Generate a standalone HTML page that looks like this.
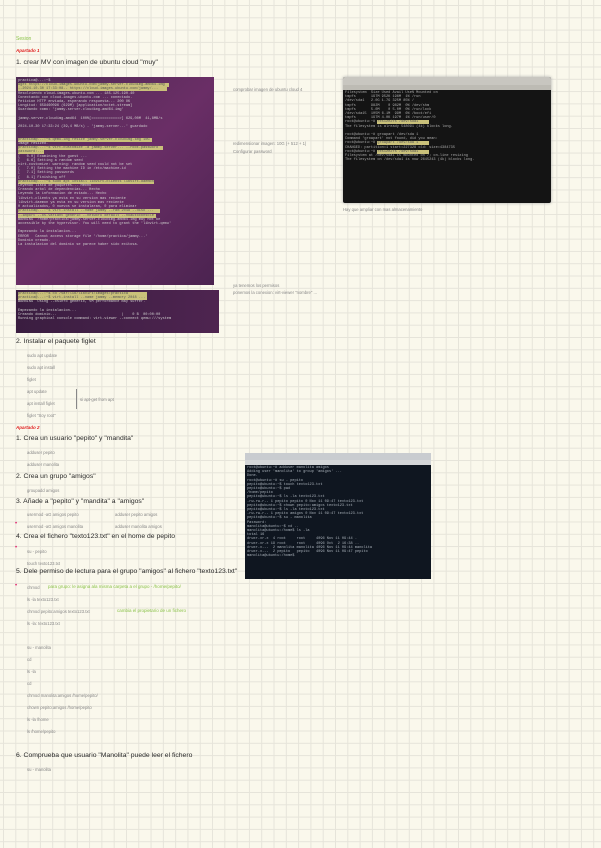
<!DOCTYPE html><html><head><meta charset="utf-8"><style>
body{margin:0;width:601px;height:848px;overflow:hidden;background-color:#faf8ec;
background-image:linear-gradient(90deg,#e6e4da 1px,transparent 1px),linear-gradient(#e6e4da 1px,transparent 1px);
background-size:12.3px 12.3px;background-position:3px 5px;font-family:"Liberation Sans",sans-serif;position:relative}
.t{position:absolute;white-space:nowrap;color:#333;}
.h{font-size:6.8px;color:#2a2a2a}
.s{font-size:4.2px;color:#888}
.r{font-size:4.5px;color:#e02020;font-style:italic;font-weight:bold}
.g{font-size:4.5px;color:#8bc34a}
.img{position:absolute;overflow:hidden}
.ln{font-family:"Liberation Mono",monospace;font-size:3.6px;line-height:4.2px;color:#ccc;white-space:pre;filter:blur(0.3px)}
.hl{background:#c9c07a;color:#555}
</style></head><body>
<div class="t g" style="left:16px;top:36px;font-size:5px">Sesion</div>
<div class="t r" style="left:16px;top:48px">Apartado 1</div>
<div class="t h" style="left:16px;top:59px">1. crear MV con imagen de ubuntu cloud "muy"</div>

<div class="img" style="left:16px;top:77px;width:198px;height:208px;background:linear-gradient(135deg,#4e2a52,#6a2e66 50%,#4b2350);">
<div class="ln" style="padding:2px 2px">practica@...:~$ 
<span class="hl">wget https://cloud-images.ubuntu.com/jammy-server-cloudimg-amd64.img  </span>
<span class="hl">--2024-10-30 17:33:08-- https://cloud-images.ubuntu.com/jammy/...    </span>
Resolviendo cloud-images.ubuntu.com ... 185.125.190.40
Conectando con cloud-images.ubuntu.com ... conectado.
Peticion HTTP enviada, esperando respuesta... 200 OK
Longitud: 659460096 (629M) [application/octet-stream]
Guardando como: 'jammy-server-cloudimg-amd64.img'

jammy-server-cloudimg-amd64  100%[=============>] 629,00M  41,8MB/s

2024-10-30 17:33:24 (39,4 MB/s) - 'jammy-server...' guardado


<span class="hl">practica@...:~$ qemu-img resize jammy-server-cloudimg.img 10G </span>
Image resized.
<span class="hl">practica@...:~$ virt-customize -a jammy-server... --root-password  </span>
<span class="hl">password:...</span>
[   0.0] Examining the guest ...
[   6.6] Setting a random seed
virt-customize: warning: random seed could not be set
[   7.0] Setting the machine ID in /etc/machine-id
[   7.1] Setting passwords
[   8.1] Finishing off
<span class="hl">practica@...:~$ sudo apt install libvirt-clients libvirt-daemon</span>
Leyendo lista de paquetes... Hecho
Creando arbol de dependencias... Hecho
Leyendo la informacion de estado... Hecho
libvirt-clients ya esta en su version mas reciente
libvirt-daemon ya esta en su version mas reciente
0 actualizados, 0 nuevos se instalaran, 0 para eliminar
<span class="hl">practica@...:~$ virt-install --name jammy --ram 2048 --disk ...   </span>
<span class="hl">--import --os-variant generic --network default --noautoconsole </span>
WARNING  /home/practica/jammy-server-cloudimg-amd64.img may not be
accessible by the hypervisor. You will need to grant the 'libvirt-qemu'

Empezando la instalacion...
ERROR   Cannot access storage file '/home/practica/jammy...'
Dominio creado.
La instalacion del dominio se parece haber sido exitosa.
</div></div>
<div class="img" style="left:16px;top:290px;width:203px;height:43px;background:linear-gradient(90deg,#3a1d40,#4e2450);">
<div class="ln" style="padding:2px 2px"><span class="hl">practica@...:~$ cd /var/lib/libvirt/images/practica         </span>
<span class="hl">practica@...:~$ virt-install --name jammy --memory 2048 ... </span>
WARNING  Using --osinfo generic, VM performance may suffer.

Empezando la instalacion...
Creando dominio...                              |    0 B  00:00:00
Running graphical console command: virt-viewer --connect qemu:///system
</div></div>

<div class="t s" style="left:233px;top:87px">comprobar imagen de ubuntu cloud 4</div>
<div class="t s" style="left:233px;top:141px">redimensionar imagen: 10G (+ 512 + 1)</div>
<div class="t s" style="left:233px;top:149px">Configurar password</div>
<div class="t s" style="left:233px;top:283px">ya tenemos los permisos</div>
<div class="t s" style="left:233px;top:290px">ponemos la conexion: virt-viewer "nombre" ...</div>

<div class="img" style="left:343px;top:77px;width:208px;height:126px;background:#141414;box-shadow:0 0 3px #aaa;border-radius:2px">
<div style="height:8px;background:#c8c6c0"></div><div style="height:5px;background:#bdbbb4"></div>
<div class="ln" style="color:#aaa;padding:1px 2px">Filesystem  Size Used Avail Use% Mounted on
tmpfs       197M 952K 196M  1% /run
/dev/sda1   2.0G 1.7G 325M 85% /
tmpfs       982M    0 982M  0% /dev/shm
tmpfs       5.0M    0 5.0M  0% /run/lock
/dev/sda15  105M 6.1M  99M  6% /boot/efi
tmpfs       197M 4.0K 197M  1% /run/user/0
root@ubuntu:~# <span class="hl">resize2fs /dev/sda1     </span>
The filesystem is already 548091 (4k) blocks long.

root@ubuntu:~# growpart /dev/sda 1
Command 'growpart' not found, did you mean:
root@ubuntu:~# <span class="hl">growpart /dev/sda 1     </span>
CHANGED: partition=1 start=227328 old: size=4384735
root@ubuntu:~# <span class="hl">resize2fs /dev/sda1     </span>
Filesystem at /dev/sda1 is mounted on /; on-line resizing
The filesystem on /dev/sda1 is now 2645243 (4k) blocks long.
</div></div>
<div class="t s" style="left:343px;top:207px">Hay que ampliar con mas almacenamiento</div>

<div class="t h" style="left:16px;top:338px">2. Instalar el paquete figlet</div>
<div class="t s" style="left:27px;top:353px">sudo apt update</div>
<div class="t s" style="left:27px;top:365px">sudo apt install</div>
<div class="t s" style="left:27px;top:377px">figlet</div>
<div class="t s" style="left:27px;top:389px">apt update</div>
<div class="t s" style="left:27px;top:401px">apt install figlet</div>
<div class="t s" style="left:27px;top:413px">figlet "Soy root"</div>
<div style="position:absolute;left:76px;top:389px;width:1px;height:20px;background:#888"></div>
<div class="t s" style="left:80px;top:397px">si apt-get from apt</div>
<div class="t r" style="left:16px;top:425px">Apartado 2</div>
<div class="t h" style="left:16px;top:435px">1. Crea un usuario "pepito" y "mandita"</div>
<div class="t s" style="left:27px;top:450px">adduser pepito</div>
<div class="t s" style="left:27px;top:462px">adduser manolita</div>
<div class="t h" style="left:16px;top:473px">2. Crea un grupo "amigos"</div>
<div class="t s" style="left:27px;top:488px">groupadd amigos</div>
<div class="t h" style="left:16px;top:498px">3. Añade a "pepito" y "mandita" a "amigos"</div>
<div class="t s" style="left:27px;top:512px">usermod -aG amigos pepito</div>
<div class="t s" style="left:115px;top:512px">adduser pepito amigos</div>
<div class="t s" style="left:27px;top:524px">usermod -aG amigos manolita</div>
<div class="t s" style="left:115px;top:524px">adduser manolita amigos</div>
<div class="t h" style="left:16px;top:533px">4. Crea el fichero "texto123.txt" en el home de pepito</div>
<div class="t s" style="left:27px;top:549px">su - pepito</div>
<div class="t s" style="left:27px;top:561px">touch texto123.txt</div>

<div class="img" style="left:245px;top:453px;width:186px;height:126px;background:#0f1620;">
<div style="height:7px;background:#c9ccd0"></div><div style="height:5px;background:#d4d6d8"></div>
<div class="ln" style="color:#a8b0b8;padding:1px 2px">root@ubuntu:~# adduser manolita amigos
Adding user 'manolita' to group 'amigos' ...
Done.
root@ubuntu:~# su - pepito
pepito@ubuntu:~$ touch texto123.txt
pepito@ubuntu:~$ pwd
/home/pepito
pepito@ubuntu:~$ ls -la texto123.txt
-rw-rw-r-- 1 pepito pepito 0 Nov 11 09:47 texto123.txt
pepito@ubuntu:~$ chown pepito:amigos texto123.txt
pepito@ubuntu:~$ ls -la texto123.txt
-rw-rw-r-- 1 pepito amigos 0 Nov 11 09:47 texto123.txt
pepito@ubuntu:~$ su - manolita
Password:
manolita@ubuntu:~$ cd ..
manolita@ubuntu:/home$ ls -la
total 16
drwxr-xr-x  4 root     root     4096 Nov 11 09:44 .
drwxr-xr-x 19 root     root     4096 Oct  2 16:38 ..
drwxr-x---  2 manolita manolita 4096 Nov 11 09:44 manolita
drwxr-x---  2 pepito   pepito   4096 Nov 11 09:47 pepito
manolita@ubuntu:/home$
</div></div>

<div class="t h" style="left:16px;top:568px">5. Dele permiso de lectura para el grupo "amigos" al fichero "texto123.txt"</div>
<div class="t s" style="left:27px;top:585px">chmod</div>
<div class="t g" style="left:48px;top:584px">para grupo: le asigna ala misma carpeta a el grupo - /home/pepito/</div>
<div class="t s" style="left:27px;top:597px">ls -la texto123.txt</div>
<div class="t s" style="left:27px;top:609px">chmod pepito:amigos texto123.txt</div>
<div class="t g" style="left:117px;top:608px">cambia el propietario de un fichero</div>
<div class="t s" style="left:27px;top:621px">ls -la: texto123.txt</div>
<div class="t s" style="left:27px;top:645px">su - manolita</div>
<div class="t s" style="left:27px;top:657px">cd</div>
<div class="t s" style="left:27px;top:669px">ls -la</div>
<div class="t s" style="left:27px;top:681px">cd</div>
<div class="t s" style="left:27px;top:693px">chmod manolita:amigos /home/pepito/</div>
<div class="t s" style="left:27px;top:705px">chown pepito:amigos /home/pepito</div>
<div class="t s" style="left:27px;top:717px">ls -la /home</div>
<div class="t s" style="left:27px;top:729px">ls /home/pepito</div>
<div class="t h" style="left:16px;top:752px">6. Comprueba que usuario "Manolita" puede leer el fichero</div>
<div class="t s" style="left:27px;top:767px">su - manolita</div>
<div class="t" style="left:15px;top:583px;color:#e0206a;font-size:6px">•</div>
<div class="t" style="left:15px;top:545px;color:#e0206a;font-size:6px">•</div>
<div class="t" style="left:15px;top:521px;color:#e0206a;font-size:6px">•</div>
</body></html>
